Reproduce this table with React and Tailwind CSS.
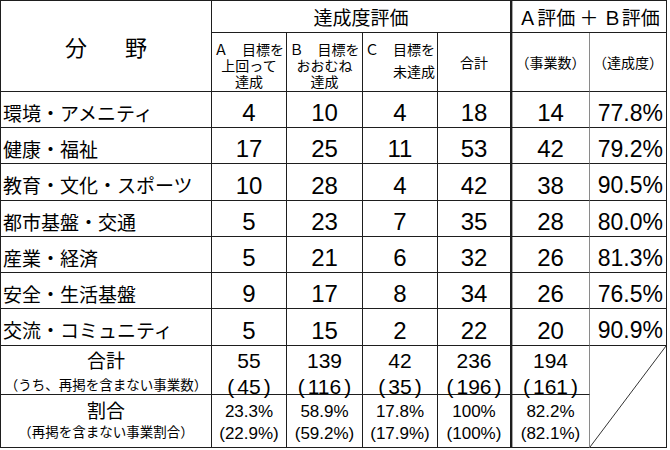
const J = "font-['Noto_Sans_CJK_JP',sans-serif]";
const N = "font-['Liberation_Sans','Noto_Sans_CJK_JP',sans-serif]";
const B = "border-r border-b border-[#1e1e1e]";
const B5 = "border-r-2 border-b border-[#1e1e1e]";
const B6 = "border-r border-b border-b-[#1e1e1e] border-r-[#8a8a8a] shadow-[inset_1px_0_0_#a8a8a8]";

const rows = [
  ["環境・アメニティ", "4", "10", "4", "18", "14", "77.8%"],
  ["健康・福祉", "17", "25", "11", "53", "42", "79.2%"],
  ["教育・文化・スポーツ", "10", "28", "4", "42", "38", "90.5%"],
  ["都市基盤・交通", "5", "23", "7", "35", "28", "80.0%"],
  ["産業・経済", "5", "21", "6", "32", "26", "81.3%"],
  ["安全・生活基盤", "9", "17", "8", "34", "26", "76.5%"],
  ["交流・コミュニティ", "5", "15", "2", "22", "20", "90.9%"],
];

const totals = [
  ["55", "45"],
  ["139", "116"],
  ["42", "35"],
  ["236", "196"],
];
const ratios = [
  ["23.3%", "22.9%"],
  ["58.9%", "59.2%"],
  ["17.8%", "17.9%"],
  ["100%", "100%"],
];

function Num({ v, cls }) {
  return (
    <div className={`${cls} flex items-center justify-center pt-[7px] ${N} text-[24px] leading-none`}>
      {v}
    </div>
  );
}

function Paren({ v }) {
  return (
    <span>
      <span className="mr-[3px]">(</span>
      {v}
      <span className="ml-[3px]">)</span>
    </span>
  );
}

export default function App() {
  return (
    <div className="w-[670px] h-[450px] bg-white text-black">
      <div className="grid w-[667px] grid-cols-[211px_75px_76px_75px_74px_78px_77px] grid-rows-[32px_59px_36px_36px_37px_36px_36px_36px_37px_49px_53px] border-t border-l border-[#1e1e1e]">
        {/* header row 1 */}
        <div className={`row-span-2 ${B} flex items-center justify-center gap-[38px] ${J} text-[22px] leading-none`}>
          <span>分</span>
          <span>野</span>
        </div>
        <div className={`col-span-4 ${B5} flex items-center justify-center ${J} text-[19px] leading-none`}>
          達成度評価
        </div>
        <div className={`col-span-2 ${B} shadow-[inset_1px_0_0_#a8a8a8] flex items-center justify-center ${J} text-[19px] leading-none`}>
          Ａ評価 ＋ Ｂ評価
        </div>

        {/* header row 2 */}
        <div className={`${B} flex flex-col items-center justify-center pt-[6px] ${J} text-[14px] leading-[16px]`}>
          <span>Ａ　目標を</span>
          <span>上回って</span>
          <span>達成</span>
        </div>
        <div className={`${B} flex flex-col items-center justify-center pt-[6px] ${J} text-[14px] leading-[16px]`}>
          <span>Ｂ　目標を</span>
          <span>おおむね</span>
          <span>達成</span>
        </div>
        <div className={`${B} flex items-center justify-center pb-[4px] ${J} text-[14px] leading-[22px]`}>
          <div className="flex flex-col items-end">
            <span>Ｃ　目標を</span>
            <span>未達成</span>
          </div>
        </div>
        <div className={`${B5} flex items-center justify-center ${J} text-[14px] leading-none`}>合計</div>
        <div className={`${B6} flex items-center justify-center ${J} text-[14px] leading-none`}>（事業数）</div>
        <div className={`${B} flex items-center justify-center ${J} text-[14px] leading-none`}>（達成度）</div>

        {/* data rows */}
        {rows.map((r) => (
          <div key={r[0]} className="contents">
            <div className={`${B} flex items-center pl-[2px] pt-[5px] ${J} text-[19px] leading-none`}>{r[0]}</div>
            <Num v={r[1]} cls={B} />
            <Num v={r[2]} cls={B} />
            <Num v={r[3]} cls={B} />
            <Num v={r[4]} cls={B5} />
            <Num v={r[5]} cls={B6} />
            <div className={`${B} flex items-center justify-end pr-[3px] pt-[7px] ${N} text-[23px] leading-none`}>{r[6]}</div>
          </div>
        ))}

        {/* totals row */}
        <div className={`${B} flex flex-col items-center ${J}`}>
          <span className="mt-[3px] text-[19px] leading-[22px]">合計</span>
          <span className="mt-[4px] text-[13.5px] leading-[18px]">（うち、再掲を含まない事業数）</span>
        </div>
        {totals.map((t, i) => (
          <div key={t[0]} className={`${i === 3 ? B5 : B} flex flex-col items-center ${N} text-[21px]`}>
            <span className="mt-[4px] leading-[22px]">{t[0]}</span>
            <span className="mt-[4px] leading-[22px]"><Paren v={t[1]} /></span>
          </div>
        ))}
        <div className={`${B6} flex flex-col items-center ${N} text-[21px]`}>
          <span className="mt-[4px] leading-[22px]">194</span>
          <span className="mt-[4px] leading-[22px]"><Paren v="161" /></span>
        </div>
        <div className={`row-span-2 ${B} relative`}>
          <svg className="absolute inset-0 w-full h-full" viewBox="0 0 76 100" preserveAspectRatio="none">
            <line x1="0" y1="100" x2="76" y2="0" stroke="#333" strokeWidth="1" vectorEffect="non-scaling-stroke" />
          </svg>
        </div>

        {/* ratio row */}
        <div className={`${B} flex flex-col items-center ${J}`}>
          <span className="mt-[4px] text-[19px] leading-[22px]">割合</span>
          <span className="mt-[1px] text-[13.5px] leading-[18px]">（再掲を含まない事業割合）</span>
        </div>
        {ratios.map((t, i) => (
          <div key={t[0]} className={`${i === 3 ? B5 : B} flex flex-col items-center ${N} text-[17px]`}>
            <span className="mt-[7px] leading-[20px]">{t[0]}</span>
            <span className="mt-[2px] leading-[20px]">({t[1]})</span>
          </div>
        ))}
        <div className={`${B6} flex flex-col items-center ${N} text-[17px]`}>
          <span className="mt-[7px] leading-[20px]">82.2%</span>
          <span className="mt-[2px] leading-[20px]">(82.1%)</span>
        </div>
      </div>
    </div>
  );
}
